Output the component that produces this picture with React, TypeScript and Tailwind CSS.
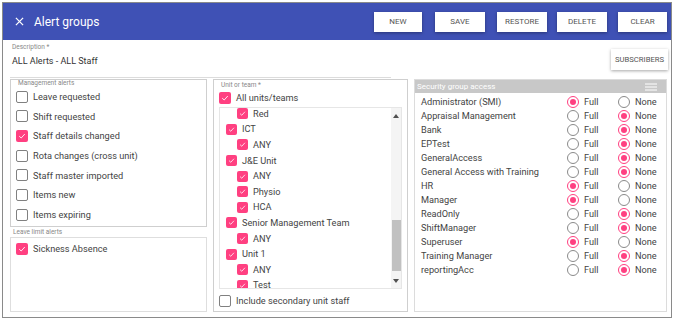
import React from "react";

function Check({ checked, size = 12 }: { checked: boolean; size?: number }) {
  if (checked) {
    return (
      <span
        className="flex shrink-0 items-center justify-center rounded-[2px] bg-[#ff4081]"
        style={{ width: size, height: size }}
      >
        <svg width={size - 4} height={size - 4} viewBox="0 0 10 10">
          <path d="M1.5 5.2 L4 7.5 L8.5 2.5" fill="none" stroke="white" strokeWidth="1.1" />
        </svg>
      </span>
    );
  }
  return (
    <span
      className="block shrink-0 rounded-[2px] border-[1.5px] border-[#808080] bg-white"
      style={{ width: size, height: size }}
    />
  );
}

function Radio({ checked }: { checked: boolean }) {
  return (
    <span
      className={
        "flex h-[12px] w-[12px] shrink-0 items-center justify-center rounded-full border " +
        (checked ? "border-[#ff4081]" : "border-[#8a8a8a]")
      }
    >
      {checked && <span className="h-[6px] w-[6px] rounded-full bg-[#ff4081]" />}
    </span>
  );
}

function HeaderButton({ label, w, ml }: { label: string; w: number; ml: number }) {
  return (
    <div
      className="flex h-[20px] items-center justify-center bg-white text-[8px] uppercase text-[#555] shadow-[0_1px_3px_rgba(0,0,0,0.35)]"
      style={{ width: w, marginLeft: ml }}
    >
      {label}
    </div>
  );
}

const mgmt: [string, boolean][] = [
  ["Leave requested", false],
  ["Shift requested", false],
  ["Staff details changed", true],
  ["Rota changes (cross unit)", false],
  ["Staff master imported", false],
  ["Items new", false],
  ["Items expiring", false],
];

const units: [string, number][] = [
  ["Red", 2],
  ["ICT", 1],
  ["ANY", 2],
  ["J&E Unit", 1],
  ["ANY", 2],
  ["Physio", 2],
  ["HCA", 2],
  ["Senior Management Team", 1],
  ["ANY", 2],
  ["Unit 1", 1],
  ["ANY", 2],
  ["Test", 2],
];

const groups: [string, boolean][] = [
  ["Administrator (SMI)", true],
  ["Appraisal Management", false],
  ["Bank", false],
  ["EPTest", false],
  ["GeneralAccess", false],
  ["General Access with Training", false],
  ["HR", true],
  ["Manager", true],
  ["ReadOnly", false],
  ["ShiftManager", false],
  ["Superuser", true],
  ["Training Manager", false],
  ["reportingAcc", false],
];

export default function App() {
  return (
    <div className="h-[320px] w-[674px] bg-white pl-[2px] pt-[2px]" style={{ fontFamily: "Roboto, 'Liberation Sans', sans-serif" }}>
      <div className="flex h-[316px] w-[670px] flex-col border border-[#8a8a8a]">
        {/* Header */}
        <div className="flex h-[37px] shrink-0 items-center bg-[#3f51b5]">
          <svg className="ml-[12px]" width="9" height="9" viewBox="0 0 10 10">
            <path d="M1 1 L9 9 M9 1 L1 9" stroke="white" strokeWidth="1.4" />
          </svg>
          <span className="ml-[10px] text-[12px] text-white">Alert groups</span>
          <div className="ml-auto mr-[4px] flex items-center">
            <HeaderButton label="New" w={48} ml={0} />
            <HeaderButton label="Save" w={50} ml={13} />
            <HeaderButton label="Restore" w={50} ml={12} />
            <HeaderButton label="Delete" w={50} ml={10} />
            <HeaderButton label="Clear" w={49} ml={11} />
          </div>
        </div>

        {/* Description row */}
        <div className="flex h-[38px] shrink-0">
          <div className="ml-[7px] w-[381px] border-b border-[#dcdcdc]">
            <div className="ml-[2px] mt-[3px] text-[6.5px] leading-[9px] text-[#888]">Description *</div>
            <div className="ml-[2px] mt-[3px] text-[9px] leading-[12px] text-[#333]">ALL Alerts - ALL Staff</div>
          </div>
          <div className="ml-auto mr-[3px] mt-[9px] flex h-[21px] w-[57px] items-center justify-center bg-white text-[7.7px] text-[#555] shadow-[0_1px_3px_rgba(0,0,0,0.35)]">
            SUBSCRIBERS
          </div>
        </div>

        {/* Panels */}
        <div className="ml-[7px] mt-[1px] flex h-[233px] gap-[6px]">
          {/* Left column */}
          <div className="flex w-[197px] flex-col">
            <div className="h-[148px] border border-[#cfcfcf]">
              <div className="ml-[7px] text-[6.5px] leading-[7px] text-[#888]">Management alerts</div>
              {mgmt.map(([t, c]) => (
                <div key={t} className="flex h-[19.67px] items-center">
                  <span className="ml-[5px]"><Check checked={c} /></span>
                  <span className="ml-[5px] text-[9.2px] text-[#444]">{t}</span>
                </div>
              ))}
            </div>
            <div className="ml-[3px] mt-[1px] text-[6.5px] leading-[9px] text-[#888]">Leave limit alerts</div>
            <div className="flex-1 border border-[#dedede]">
              <div className="mt-[4px] flex h-[14px] items-center">
                <span className="ml-[5px]"><Check checked /></span>
                <span className="ml-[5px] text-[9.2px] text-[#444]">Sickness Absence</span>
              </div>
            </div>
          </div>

          {/* Middle column */}
          <div className="flex w-[195px] flex-col border border-[#cfcfcf]">
            <div className="ml-[7px] mt-[1px] text-[6.5px] leading-[8px] text-[#888]">Unit or team *</div>
            <div className="flex h-[18px] items-center">
              <span className="ml-[5px]"><Check checked /></span>
              <span className="ml-[5px] text-[9.2px] text-[#444]">All units/teams</span>
            </div>
            <div className="ml-[5px] flex h-[182px] w-[183px] overflow-hidden border border-[#e6e6e6]">
              <div className="-mt-[2px] flex-1">
                {units.map(([t, lvl], i) => (
                  <div key={i} className="flex h-[15.6px] items-center">
                    <span className={lvl === 1 ? "ml-[6px]" : "ml-[17px]"}>
                      <Check checked size={11} />
                    </span>
                    <span className="ml-[5px] text-[9.2px] text-[#444]">{t}</span>
                  </div>
                ))}
              </div>
              <div className="flex w-[10px] flex-col items-center bg-[#f4f4f4]">
                <svg className="mt-[6px]" width="6" height="4" viewBox="0 0 6 4">
                  <path d="M0 4 L3 0 L6 4 Z" fill="#505050" />
                </svg>
                <div className="mt-[102px] h-[51px] w-[9px] bg-[#c1c1c1]" />
                <svg className="mt-[8px]" width="6" height="4" viewBox="0 0 6 4">
                  <path d="M0 0 L3 4 L6 0 Z" fill="#505050" />
                </svg>
              </div>
            </div>
            <div className="mt-[5px] flex h-[14px] items-center">
              <span className="ml-[5px]"><Check checked={false} /></span>
              <span className="ml-[5px] text-[9.2px] text-[#444]">Include secondary unit staff</span>
            </div>
          </div>

          {/* Right column */}
          <div className="flex w-[253px] flex-col border border-[#dcdcdc]">
            <div className="flex h-[13px] shrink-0 items-center bg-[#c8c8c8]">
              <span className="ml-[2px] text-[8px] text-white">Security group access</span>
              <svg className="ml-auto mr-[9px]" width="12" height="8" viewBox="0 0 12 8">
                <path d="M0 1 H12 M0 4 H12 M0 7 H12" stroke="white" strokeWidth="1" />
              </svg>
            </div>
            <div className="mt-[2px]">
              {groups.map(([t, full]) => (
                <div key={t} className="flex h-[14px] items-center">
                  <span className="ml-[6px] w-[146px] text-[9.2px] text-[#444]">{t}</span>
                  <Radio checked={full} />
                  <span className="ml-[5px] w-[34px] text-[9.2px] text-[#444]">Full</span>
                  <Radio checked={!full} />
                  <span className="ml-[5px] text-[9.2px] text-[#444]">None</span>
                </div>
              ))}
            </div>
          </div>
        </div>
      </div>
    </div>
  );
}
